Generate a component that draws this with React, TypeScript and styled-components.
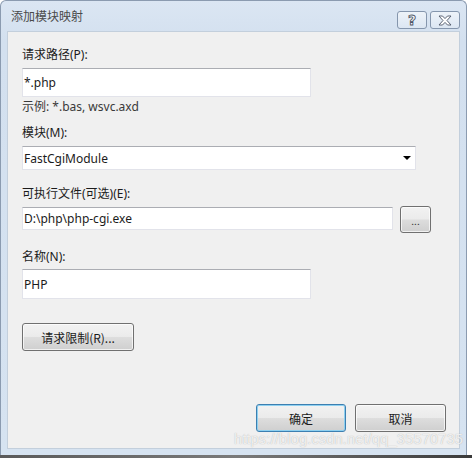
import React from "react";
import styled, { createGlobalStyle } from "styled-components";

const Global = createGlobalStyle`
  html, body { margin: 0; padding: 0; background: #ffffff; }
  body { width: 472px; height: 458px; overflow: hidden; position: relative;
    font-family: "Noto Sans", "Noto Sans CJK SC", sans-serif; font-size: 12px; color: #1b1b1b; }
`;

const Page = styled.div`
  width: 472px;
  height: 458px;
  display: flex;
  flex-direction: column;
  position: relative;
`;

const Window = styled.div`
  width: 467px;
  height: 455px;
  box-sizing: border-box;
  border: 1px solid #8b9bb0;
  border-bottom: none;
  border-radius: 6px 6px 0 0;
  background: linear-gradient(#dbe6f3, #d3e0ef 40px, #d6e3f1);
  display: flex;
  flex-direction: column;
  padding: 0 6px 6px 6px;
`;

const TitleBar = styled.div`
  height: 30px;
  display: flex;
  align-items: center;
  justify-content: space-between;
`;

const Title = styled.div`
  font-family: "Noto Sans CJK SC", sans-serif;
  font-size: 12px;
  color: #4a4a4a;
  padding-left: 4px;
  padding-bottom: 2px;
`;

const TitleButtons = styled.div`
  display: flex;
  gap: 3px;
  align-self: flex-start;
  margin-top: 10px;
`;

const CaptionButton = styled.div<{ $w: number }>`
  width: ${(p) => p.$w}px;
  height: 18px;
  box-sizing: border-box;
  border: 1px solid #8596ad;
  border-radius: 3px;
  background: linear-gradient(rgba(255,255,255,0.55), rgba(255,255,255,0.15));
  display: flex;
  align-items: center;
  justify-content: center;
`;

const HelpGlyph = styled.span`
  font-family: "DejaVu Sans", sans-serif;
  font-weight: bold;
  font-size: 14px;
  line-height: 1;
  color: #ffffff;
  -webkit-text-stroke: 0.9px #4d5666;
`;

const Client = styled.div`
  flex: 1;
  background: #f0f0f0;
  border: 1px solid #c3cfdc;
  display: flex;
  flex-direction: column;
  padding: 15px 13px 16px 14px;
`;

const Label = styled.div<{ $mt?: number; $muted?: boolean }>`
  line-height: 16px;
  height: 16px;
  margin-top: ${(p) => p.$mt ?? 0}px;
  white-space: nowrap;
  color: ${(p) => (p.$muted ? "#3a3a3a" : "#1b1b1b")};
`;

const TextBox = styled.div<{ $w: number; $h: number; $mt?: number }>`
  width: ${(p) => p.$w}px;
  height: ${(p) => p.$h}px;
  margin-top: ${(p) => p.$mt ?? 0}px;
  box-sizing: border-box;
  background: #ffffff;
  border: 1px solid #e2e3ea;
  border-top-color: #abadb3;
  display: flex;
  align-items: center;
  padding-left: 1px;
  flex-shrink: 0;
`;

const Arrow = styled.div`
  margin-left: auto;
  margin-right: 4px;
  width: 0;
  height: 0;
  border-left: 4px solid transparent;
  border-right: 4px solid transparent;
  border-top: 4px solid #000;
`;

const Row = styled.div<{ $mt?: number }>`
  display: flex;
  align-items: flex-start;
  gap: 7px;
  margin-top: ${(p) => p.$mt ?? 0}px;
`;

const Button = styled.div<{ $w: number; $h: number; $mt?: number; $focus?: boolean }>`
  width: ${(p) => p.$w}px;
  height: ${(p) => p.$h}px;
  margin-top: ${(p) => p.$mt ?? 0}px;
  box-sizing: border-box;
  border: 1px solid ${(p) => (p.$focus ? "#3c7fb1" : "#707070")};
  border-radius: 3px;
  background: linear-gradient(#f2f2f2 0%, #ebebeb 48%, #dddddd 52%, #cfcfcf 100%);
  box-shadow: inset 0 0 0 1px ${(p) => (p.$focus ? "#8ed0f0" : "rgba(255,255,255,0.7)")};
  display: flex;
  align-items: center;
  justify-content: center;
  font-family: "Noto Sans CJK SC", sans-serif;
  font-size: 12px;
  color: #1b1b1b;
  flex-shrink: 0;
`;

const Dots = styled.span`
  font-size: 10px;
  line-height: 1;
  margin-top: 2px;
  color: #333;
`;

const Footer = styled.div`
  margin-top: auto;
  display: flex;
  justify-content: flex-end;
  gap: 9px;
`;

const Watermark = styled.div`
  position: absolute;
  right: 9px;
  top: 431px;
  font-family: "Liberation Sans", sans-serif;
  font-size: 14.5px;
  letter-spacing: 0.2px;
  color: rgba(255, 255, 255, 0.8);
  text-shadow: 0 0 1px rgba(120, 120, 120, 0.6);
  white-space: nowrap;
  pointer-events: none;
`;

const BottomStrip = styled.div`
  height: 3px;
  width: 472px;
  background: linear-gradient(90deg, #5a5a5a, #7a7a7a 50%, #3a3a3a);
`;

export default function App() {
  return (
    <>
      <Global />
      <Page>
        <Window>
          <TitleBar>
            <Title>添加模块映射</Title>
            <TitleButtons>
              <CaptionButton $w={30}>
                <HelpGlyph>?</HelpGlyph>
              </CaptionButton>
              <CaptionButton $w={30}>
                <svg width="16" height="11" viewBox="0 0 16 11">
                  <path
                    d="M2 1 L5.5 1 L8 3.6 L10.5 1 L14 1 L10 5.5 L14 10 L10.5 10 L8 7.4 L5.5 10 L2 10 L6 5.5 Z"
                    fill="#ffffff"
                    stroke="#4d5666"
                    strokeWidth="0.9"
                    strokeLinejoin="round"
                  />
                </svg>
              </CaptionButton>
            </TitleButtons>
          </TitleBar>
          <Client>
            <Label>请求路径(P):</Label>
            <TextBox $w={289} $h={29} $mt={5}>*.php</TextBox>
            <Label $mt={2} $muted>示例: *.bas, wsvc.axd</Label>
            <Label $mt={10}>模块(M):</Label>
            <TextBox $w={394} $h={24} $mt={5}>
              FastCgiModule
              <Arrow />
            </TextBox>
            <Label $mt={16}>可执行文件(可选)(E):</Label>
            <Row $mt={4}>
              <TextBox $w={371} $h={23} $mt={1}>D:\php\php-cgi.exe</TextBox>
              <Button $w={31} $h={27}>
                <Dots>...</Dots>
              </Button>
            </Row>
            <Label $mt={16}>名称(N):</Label>
            <TextBox $w={289} $h={30} $mt={4}>PHP</TextBox>
            <Button $w={112} $h={28} $mt={24}>请求限制(R)...</Button>
            <Footer>
              <Button $w={90} $h={28} $focus>确定</Button>
              <Button $w={91} $h={28}>取消</Button>
            </Footer>
          </Client>
        </Window>
        <BottomStrip />
        <Watermark>https://blog.csdn.net/qq_35570735</Watermark>
      </Page>
    </>
  );
}
